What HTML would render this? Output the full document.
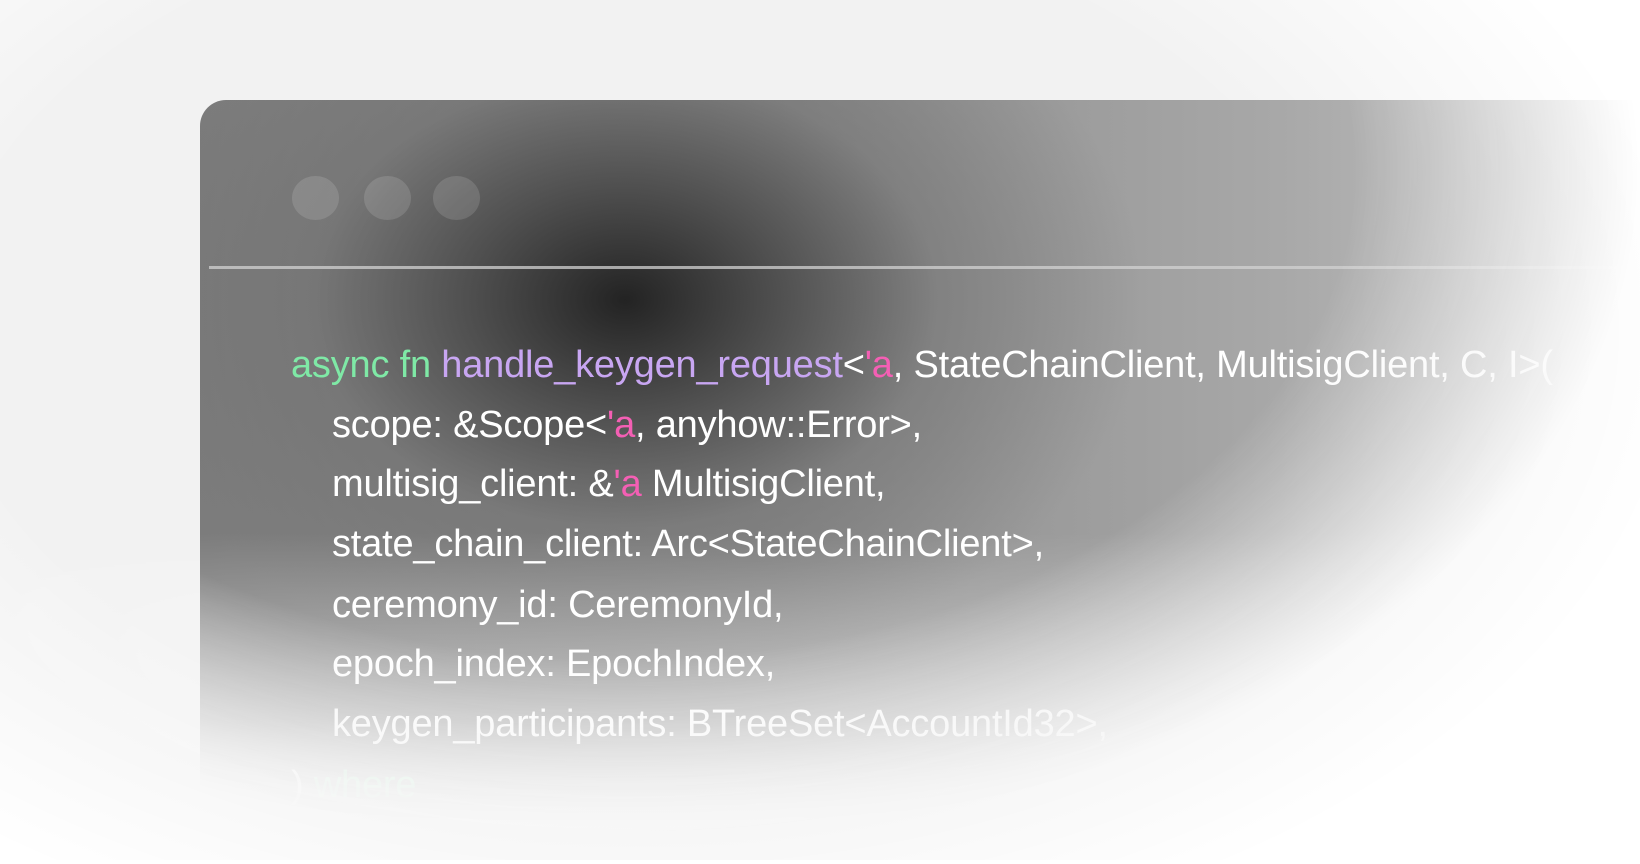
<!DOCTYPE html>
<html><head><style>
html,body{margin:0;padding:0;width:1640px;height:860px;overflow:hidden;background:#fff;}
.shadow{position:absolute;left:0;top:0;width:1640px;height:860px;
background:radial-gradient(ellipse 1050px 650px at 640px 330px, rgba(0,0,0,.05) 65%, rgba(0,0,0,0) 100%);}
.wrap{position:absolute;left:0;top:0;width:1640px;height:860px;
-webkit-mask-image:radial-gradient(ellipse 1020px 680px at 620px 170px, #000 72%, rgba(0,0,0,.5) 86%, transparent 100%);
mask-image:radial-gradient(ellipse 1020px 680px at 620px 170px, #000 72%, rgba(0,0,0,.5) 86%, transparent 100%);}
.win{position:absolute;left:200px;top:100px;width:1440px;height:760px;border-radius:26px 0 0 0;
background:
radial-gradient(ellipse 520px 380px at 425px 200px, rgba(35,35,35,1) 0%, rgba(70,70,70,.85) 30%, rgba(110,110,110,.5) 60%, rgba(130,130,130,0) 100%),
linear-gradient(90deg,#7c7c7c 0%,#8c8c8c 40%,#a8a8a8 75%,#c8c8c8 100%);}
.fade{position:absolute;left:0;top:0;width:1640px;height:860px;pointer-events:none;
background:linear-gradient(180deg, rgba(255,255,255,0) 62%, rgba(255,255,255,.5) 84%, rgba(255,255,255,1) 96%);}
.dot{position:absolute;top:176px;width:47px;height:44px;border-radius:50%;background:rgba(255,255,255,.13);}
.hr{position:absolute;left:209px;top:266px;width:1431px;height:3px;background:rgba(210,210,210,.75);}
.code{position:absolute;left:291px;top:0;font-family:"Liberation Sans",sans-serif;font-size:38px;color:#fff;white-space:pre;letter-spacing:-0.2px;}
.l{position:absolute;left:0;line-height:42px;}
.i{left:41px}
.g{color:#7fe9a6}.p{color:#c8a6f2}.k{color:#f45fb4}
</style></head><body>
<div class="shadow"></div>
<div class="wrap">
<div class="win"></div>
<div class="dot" style="left:292px"></div>
<div class="dot" style="left:364px"></div>
<div class="dot" style="left:433px"></div>
<div class="hr"></div>
<div class="code">
<div class="l" style="top:344px"><span class="g">async fn </span><span class="p">handle_keygen_request</span>&lt;<span class="k">'a</span>, StateChainClient, MultisigClient, C, I&gt;(</div>
<div class="l i" style="top:404px">scope: &amp;Scope&lt;<span class="k">'a</span>, anyhow::Error&gt;,</div>
<div class="l i" style="top:463px">multisig_client: &amp;<span class="k">'a</span> MultisigClient,</div>
<div class="l i" style="top:523px">state_chain_client: Arc&lt;StateChainClient&gt;,</div>
<div class="l i" style="top:584px">ceremony_id: CeremonyId,</div>
<div class="l i" style="top:643px">epoch_index: EpochIndex,</div>
<div class="l i" style="top:703px">keygen_participants: BTreeSet&lt;AccountId32&gt;,</div>
<div class="l" style="top:764px">) <span class="g">where</span></div>
<div class="l i" style="top:822px">MultisigClient: MultisigClientApi</div>
</div>
<div class="fade"></div>
</div>
</body></html>
